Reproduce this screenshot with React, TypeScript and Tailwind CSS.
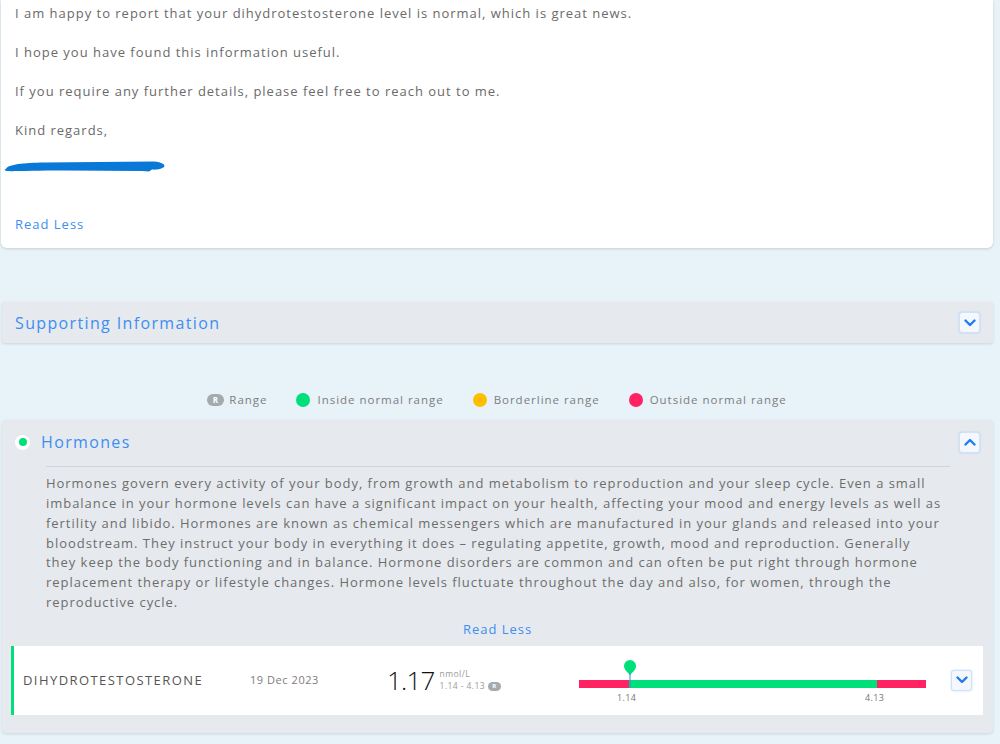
import React from 'react';

const font = { fontFamily: '"Open Sans", "Liberation Sans", sans-serif' };

function ChevronButton({ up = false }: { up?: boolean }) {
  return (
    <button className="flex h-[21px] w-[21px] items-center justify-center rounded-[3px] border border-[#cfe2fb] bg-[#f4f8fd] shadow-[0_0_2px_rgba(59,140,240,0.35)]">
      <svg width="12" height="8" viewBox="0 0 12 8" fill="none">
        <path
          d={up ? 'M1.5 6.5L6 2L10.5 6.5' : 'M1.5 1.5L6 6L10.5 1.5'}
          stroke="#1f7cf2"
          strokeWidth="2.4"
          strokeLinecap="round"
          strokeLinejoin="round"
        />
      </svg>
    </button>
  );
}

function RBadge({ small = false }: { small?: boolean }) {
  return (
    <span
      className={
        small
          ? 'inline-flex h-[9px] w-[13px] items-center justify-center rounded-full bg-[#a3abb1] text-[6px] font-bold text-white'
          : 'inline-flex h-[12px] w-[17px] items-center justify-center rounded-full bg-[#a3abb1] text-[8px] font-bold text-white'
      }
    >
      R
    </span>
  );
}

function LegendItem({ color, label }: { color: string; label: string }) {
  return (
    <div className="flex items-center gap-[7px]">
      <span className={`h-[14px] w-[14px] rounded-full ${color}`} />
      <span>{label}</span>
    </div>
  );
}

export default function App() {
  return (
    <div className="min-h-[744px] w-[1000px] overflow-hidden bg-[#e8f2f9] text-[#6a6a6a]" style={font}>
      {/* report letter */}
      <div className="ml-[1px] mr-[7px] rounded-b-[6px] bg-white px-[14px] pb-[14px] shadow-[0_1px_3px_rgba(0,0,0,0.15)]">
        <div className="flex flex-col gap-[19px] pt-[3px] text-[13px] leading-[20px] tracking-[0.076em]">
          <p>I am happy to report that your dihydrotestosterone level is normal, which is great news.</p>
          <p>I hope you have found this information useful.</p>
          <p>If you require any further details, please feel free to reach out to me.</p>
          <p>Kind regards,</p>
        </div>
        <svg className="-ml-[11px] mt-[19px] block" width="162" height="16" viewBox="0 0 162 16">
          <path
            d="M2 10 C4 5 20 4 40 3.5 L150 2.5 C158 3 162 6 160 8 C158 10 152 11 148 10.5 L145 12.5 L138 12 L60 11.5 C30 11.5 8 12.5 3 12 C0 11.5 0 10.5 2 10 Z"
            fill="#0a78d6"
          />
        </svg>
        <div className="mt-[39px] text-[13px] leading-[20px] tracking-[0.076em] text-[#3d8ef0]">Read Less</div>
      </div>

      {/* supporting information */}
      <div className="ml-[2px] mr-[7px] mt-[54px] flex h-[41px] items-center justify-between rounded-[3px] bg-[#e6eaee] pl-[13px] pr-[13px] shadow-[0_1px_3px_rgba(0,0,0,0.12)]">
        <span className="text-[16px] tracking-[0.085em] text-[#3d8ef0]">Supporting Information</span>
        <ChevronButton />
      </div>

      {/* legend */}
      <div className="mt-[48px] flex items-center justify-center gap-[29px] pr-[6px] text-[11.5px] tracking-[0.085em] text-[#7d7d7d]">
        <div className="flex items-center gap-[5px]">
          <RBadge />
          <span>Range</span>
        </div>
        <LegendItem color="bg-[#00e07a]" label="Inside normal range" />
        <LegendItem color="bg-[#ffbf00]" label="Borderline range" />
        <LegendItem color="bg-[#ff2461]" label="Outside normal range" />
      </div>

      {/* hormones */}
      <div className="ml-[2px] mr-[7px] mt-[12px] rounded-[4px] bg-[#e6eaee] pb-[18px] shadow-[0_1px_3px_rgba(0,0,0,0.12)]">
        <div className="flex items-center justify-between pl-[13px] pr-[13px] pt-[10px]">
          <div className="flex items-center gap-[11px]">
            <span className="flex h-[15px] w-[15px] items-center justify-center rounded-full bg-white">
              <span className="h-[8px] w-[8px] rounded-full bg-[#00e07a]" />
            </span>
            <span className="text-[16px] tracking-[0.085em] text-[#3d8ef0]">Hormones</span>
          </div>
          <ChevronButton up />
        </div>
        <div className="ml-[44px] mr-[43px] mt-[12px] border-t border-[#cfd4d8] pt-[7px]">
          <p className="-mr-[8px] text-[13px] leading-[19.8px] tracking-[0.074em] text-[#6d6d6d]">
            Hormones govern every activity of your body, from growth and metabolism to reproduction and your sleep cycle. Even a small
            imbalance in your hormone levels can have a significant impact on your health, affecting your mood and energy levels as well as
            fertility and libido. Hormones are known as chemical messengers which are manufactured in your glands and released into your
            bloodstream. They instruct your body in everything it does – regulating appetite, growth, mood and reproduction. Generally
            <br />
            they keep the body functioning and in balance. Hormone disorders are common and can often be put right through hormone
            replacement therapy or lifestyle changes. Hormone levels fluctuate throughout the day and also, for women, through the
            reproductive cycle.
          </p>
        </div>
        <div className="mt-[6px] text-center text-[13px] leading-[20px] tracking-[0.076em] text-[#3d8ef0]">Read Less</div>

        {/* result row */}
        <div className="ml-[9px] mr-[10px] mt-[7px] flex h-[69px] items-center border-l-[3px] border-[#00e07a] bg-white pl-[9px] pr-[11px]">
          <span className="w-[227px] text-[13px] tracking-[0.11em] text-[#555]">DIHYDROTESTOSTERONE</span>
          <span className="w-[137px] text-[11px] tracking-[0.05em] text-[#7d7d7d]">19 Dec 2023</span>
          <div className="flex w-[192px] items-center gap-[5px]">
            <span className="text-[26px] font-light leading-none tracking-[-0.03em] text-[#111]">1.17</span>
            <div className="flex flex-col gap-[2px] text-[8.5px] leading-[10px] tracking-[0.05em] text-[#9a9a9a]">
              <span>nmol/L</span>
              <span className="flex items-center gap-[3px]">
                1.14 - 4.13 <RBadge small />
              </span>
            </div>
          </div>
          <div className="relative mt-[8px] h-[34px] w-[347px]">
            <div className="absolute left-0 top-[13px] flex h-[8px] w-full">
              <div className="w-[50px] bg-[#ff2461]" />
              <div className="w-[248px] bg-[#00e07a]" />
              <div className="flex-1 bg-[#ff2461]" />
            </div>
            <svg className="absolute left-[45px] top-[-7px]" width="12" height="28" viewBox="0 0 12 28">
              <path d="M6 15 C2 11 0 9 0 6 A6 6 0 0 1 12 6 C12 9 10 11 6 15 Z" fill="#00e07a" />
              <line x1="6" y1="13" x2="6" y2="28" stroke="#2a8de0" strokeWidth="1" />
            </svg>
            <span className="absolute left-[38px] top-[24px] text-[9px] tracking-[0.04em] text-[#777]">1.14</span>
            <span className="absolute left-[286px] top-[24px] text-[9px] tracking-[0.04em] text-[#777]">4.13</span>
          </div>
          <div className="ml-auto">
            <ChevronButton />
          </div>
        </div>
      </div>
    </div>
  );
}
